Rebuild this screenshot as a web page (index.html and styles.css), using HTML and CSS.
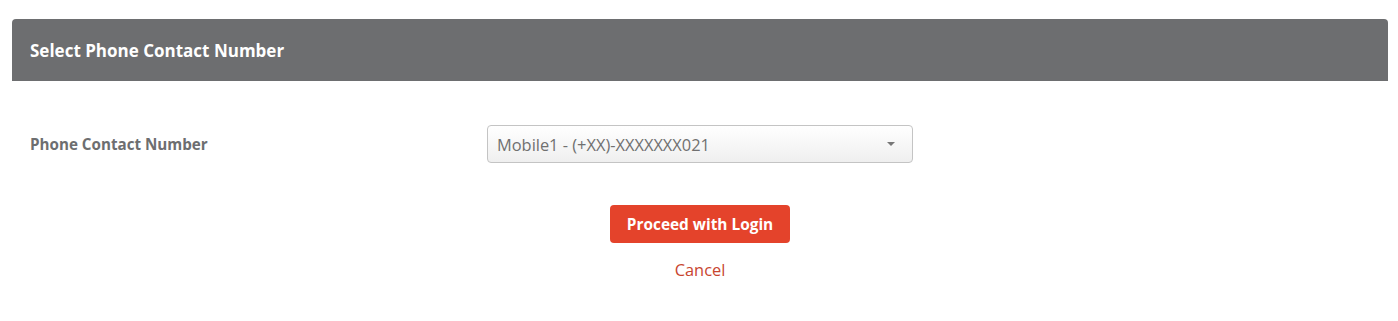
FILE: index.html
```html
<!DOCTYPE html>
<html>
<head>
<meta charset="utf-8">
<link rel="stylesheet" href="styles.css">
</head>
<body>
<div class="panel">
  <div class="panel-head">Select Phone Contact Number</div>
  <div class="panel-body">
    <div class="row">
      <div class="label">Phone Contact Number</div>
      <div class="select">
        <span class="select-text">Mobile1 - (+XX)-XXXXXXX021</span>
        <span class="caret"></span>
      </div>
    </div>
    <div class="actions">
      <button class="btn">Proceed with Login</button>
      <a class="cancel">Cancel</a>
    </div>
  </div>
</div>
</body>
</html>
```

FILE: styles.css
```css
html, body {
  margin: 0;
  padding: 0;
  background: #fff;
}
body {
  font-family: "Open Sans", Lato, sans-serif;
  padding: 19px 10px 0 12px;
}
.panel {
  width: 1376px;
}
.panel-head {
  height: 62px;
  background: #6d6e70;
  border-radius: 4px 4px 0 0;
  color: #fff;
  font-weight: 700;
  font-size: 17px;
  display: flex;
  align-items: center;
  padding-left: 18px;
}
.panel-body {
  padding-top: 44px;
}
.row {
  display: flex;
  align-items: center;
  height: 38px;
}
.label {
  width: 457px;
  padding-left: 18px;
  color: #6d6e70;
  font-weight: 700;
  font-size: 15.2px;
}
.select {
  box-sizing: border-box;
  width: 426px;
  height: 38px;
  border: 1px solid #c4c4c4;
  border-radius: 4px;
  background: linear-gradient(#ffffff, #efefef);
  display: flex;
  align-items: center;
  justify-content: space-between;
  padding: 0 17px 0 9px;
}
.select-text {
  color: #707070;
  font-size: 16.4px;
}
.caret {
  width: 0;
  height: 0;
  border-left: 4px solid transparent;
  border-right: 4px solid transparent;
  border-top: 4px solid #777;
}
.actions {
  display: flex;
  flex-direction: column;
  align-items: center;
  padding-top: 42px;
  width: 1376px;
}
.btn {
  width: 180px;
  height: 38px;
  background: #e4432b;
  border: none;
  border-radius: 4px;
  color: #fff;
  font-family: "Open Sans", Lato, sans-serif;
  font-weight: 700;
  font-size: 15.4px;
}
.cancel {
  margin-top: 15px;
  color: #c8452f;
  font-size: 16.4px;
}
```
